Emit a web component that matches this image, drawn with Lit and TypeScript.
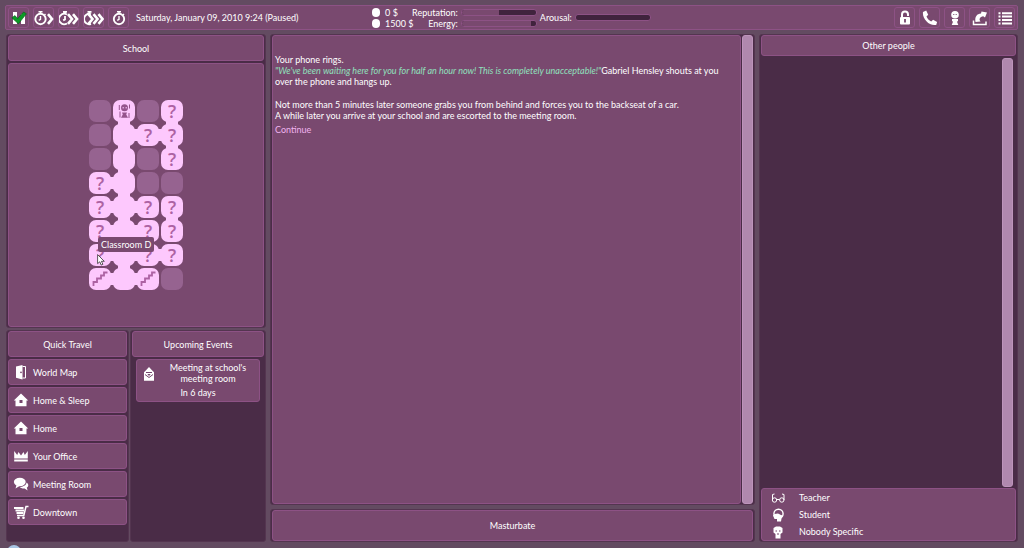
import { LitElement, html, css, svg, nothing, TemplateResult } from "lit";
import { customElement, property } from "lit/decorators.js";
import { classMap } from "lit/directives/class-map.js";

const clock = (x: number) => svg`
  <circle cx=${x} cy="9" r="5.2" fill="none" stroke="#fff" stroke-width="1.9"/>
  <path d="M${x - 2} 1.800h4M${x} 2v2M${x} 6v3.400l-1.800 1M${x + 4} 4l1 1" fill="none" stroke="#fff" stroke-width="1.400"/>`;
const chevron = (x: number) => svg`<path d="M${x} 4.200l4 4.800-4 4.800" fill="none" stroke="#fff" stroke-width="2.600"/>`;

const icons: Record<string, TemplateResult> = {
  check: html`<svg viewBox="0 0 16 16"><path d="M2 2h4v12H2zM10 4h4v10h-4z" fill="#fff"/><path d="M.8 7.800L4 5.600l2.600 3L12.600 2l2.800 1.800-8 10z" fill="#0c9a26" stroke="#075f17" stroke-width=".6"/></svg>`,
  play1: html`<svg class="wide" viewBox="0 0 20 16">${clock(6.5)}${chevron(14)}</svg>`,
  play2: html`<svg class="wide" viewBox="0 0 20 16"><path d="M8 4.600a5.200 5.200 0 1 0 0 8.800M4 1.800h4M6 2v2M6 6v3.400l-1.800 1" fill="none" stroke="#fff" stroke-width="1.800"/>${chevron(9)}${chevron(14)}</svg>`,
  play3: html`<svg class="wide" viewBox="0 0 20 16"><path d="M7 4.200a5 5.200 0 1 0 0 9.600M3.500 1.800h4M5.500 2v2" fill="none" stroke="#fff" stroke-width="1.800"/>${chevron(4.5)}${chevron(9.5)}${chevron(14.5)}</svg>`,
  clock: html`<svg class="wide" viewBox="0 0 20 16">${clock(10)}</svg>`,
  lock: html`<svg viewBox="0 0 16 16"><path d="M5 8V4.500a3 3 0 0 1 6 0V6" fill="none" stroke="#fff" stroke-width="2"/><rect x="3" y="7" width="10" height="7.500" rx="1" fill="#fff"/><path d="M8 9v3.500" stroke="#75466d" stroke-width="1.800"/></svg>`,
  phone: html`<svg viewBox="0 0 16 16"><path d="M1 2L4.200.6l2 4.200-1.700 1.700c.8 2.200 2.600 4 4.700 4.900l1.900-1.700 4 2.200-.9 3C7.500 16.500 0 8.800 1 2z" fill="#fff"/></svg>`,
  person: html`<svg viewBox="0 0 16 16"><circle cx="8" cy="4.800" r="3.800" fill="#fff"/><path d="M5 9h6v2l-1 .8 1.300 3.200H4.700L6 11.800 5 11z" fill="#fff"/><path d="M6.300 4.500h1M8.700 4.500h1" stroke="#75466d"/></svg>`,
  share: html`<svg viewBox="0 0 16 16"><path d="M1.500 10.500v4h12.500v-3" fill="none" stroke="#fff" stroke-width="1.500"/><path d="M3.500 12C2.500 7 5 3.500 9 3.500L9.500 1.500l5.500 1-2 5-1.800-1.200C8 7 6.500 9 8.500 11.500z" fill="#fff"/></svg>`,
  list: html`<svg viewBox="0 0 16 16"><path d="M1.500 3.200h2M5 3.200h10M1.500 6.600h2M5 6.600h10M1.500 10h2M5 10h10M1.500 13.400h2M5 13.400h10" stroke="#fff" stroke-width="2"/></svg>`,
  door: html`<svg viewBox="0 0 16 16"><path d="M3 2.500L9.500 1v14.500L3 13.800z" fill="#fff"/><path d="M9.500 2.500h3v11.500h-3" fill="none" stroke="#fff"/><circle cx="8" cy="8.300" r=".9" fill="#75466d"/></svg>`,
  home: html`<svg viewBox="0 0 16 16"><path d="M8 1.500L15.200 8.500h-1.700v5.800h-11V8.500H.8z" fill="#fff"/><rect x="6.500" y="8" width="3" height="3" fill="#75466d"/></svg>`,
  crown: html`<svg viewBox="0 0 16 16"><path d="M1.200 3l3 4L5.500 4 8 7.500 10.500 4l1.300 3 3-4v7.500H1.200zM1.200 11.600h13.600v2H1.200z" fill="#fff"/></svg>`,
  chat: html`<svg viewBox="0 0 16 16"><ellipse cx="6.800" cy="6" rx="5.900" ry="4.200" fill="#fff"/><path d="M3.500 9l-1 3.500 4-2.500M13.500 6.500c3 2 1.600 4.500.3 5l.8 3-3-2c-2 .2-4.500-.6-4.800-1.500 3 0 6.500-1.600 6.700-4.500z" fill="#fff"/></svg>`,
  cart: html`<svg viewBox="0 0 16 16"><path d="M1 4h9.500M2.500 6.500h8.500M3.500 9h7" stroke="#fff" stroke-width="2"/><path d="M15.500 2.500H13l-2.200 9H4" fill="none" stroke="#fff" stroke-width="1.500"/><circle cx="5.500" cy="13.800" r="1.300" fill="#fff"/><circle cx="10.500" cy="13.800" r="1.300" fill="#fff"/></svg>`,
  letter: html`<svg viewBox="0 0 16 16"><path d="M8 1l3 3.200 2 2v8.600H3V6.200l2-2z" fill="#fff"/><path d="M5 6.500h6M4 8.500L8 11.500l4-3" fill="none" stroke="#75466d"/><path d="M8 10L6.300 8h3.400z" fill="#75466d"/></svg>`,
  glasses: html`<svg viewBox="0 0 16 16"><path d="M2.500 10L2.500 4.500l2-.5M14 10V4.500l-2-.5M6.500 9.500h3" fill="none" stroke="#fff"/><circle cx="4.500" cy="10" r="2.200" fill="none" stroke="#fff"/><circle cx="11.800" cy="10" r="2.200" fill="none" stroke="#fff"/></svg>`,
  student: html`<svg viewBox="0 0 16 16"><circle cx="8.500" cy="6.800" r="4.600" fill="none" stroke="#fff" stroke-width="1.400"/><path d="M4.500 7L8 6.500l3 1.500 2 .5-1.500 3-.5 3H7V12H4.500L3 8.500z" fill="#fff"/></svg>`,
  skull: html`<svg viewBox="0 0 16 16"><path d="M3.500 4L6 2.500h4l2.500 1.500v4.500L10.500 10v4.500h-5V10l-2-1.500z" fill="#fff"/><path d="M5.500 7h1.500M9 7h1.500M7 10h2" stroke="#75466d"/></svg>`,
  figure: html`<svg viewBox="0 0 16 16"><circle cx="8.500" cy="4.800" r="3.500" fill="#95538c"/><path d="M6 9.500h5l-.8 2 1.800 3.300H5l1.800-3.300z" fill="#95538c"/><path d="M3.300 2v5M4 8.500v6M13.500 1.500v4M13 10v5" stroke="#95538c"/><path d="M6.500 4.800H8M9.500 4.800H11" stroke="#fdc8fd"/></svg>`,
  stairs: html`<svg viewBox="0 0 16 16"><path d="M1.500 15v-4H5V7.500h4V4.500h3V1.500h3.500" fill="none" stroke="#ad62a3" stroke-width="1.800"/></svg>`,
};

/* Each cell: kind (x = unexplored, o = corridor, q = room, p = player, s = stairs),
   followed by r / d when it joins its right-hand / lower neighbour. */
const floor = [
  ["x", "pd", "x", "qd"],
  ["x", "ord", "qr", "qd"],
  ["x", "od", "x", "q"],
  ["qr", "od", "x", "x"],
  ["qr", "ord", "q", "qd"],
  ["qr", "ord", "q", "q"],
  ["qr", "ord", "qr", "q"],
  ["sr", "or", "s", "x"],
];

const theme = css`
  :host { display: block; box-sizing: border-box; }
  *, *::before, *::after { box-sizing: border-box; }
  button { font: inherit; color: inherit; margin: 0; padding: 0; cursor: pointer; }
  svg { width: 16px; height: 16px; display: block; flex: none; }
  .card { background: #79496f; border: 1px solid #8d5285; border-radius: 3px; }
`;

@customElement("floor-map")
class FloorMap extends LitElement {
  static styles = [theme, css`
    .map { display: grid; grid-template-columns: repeat(4, 22px); grid-auto-rows: 22px; gap: 2px; }
    .tile { position: relative; display: grid; place-items: center; border: 0; border-radius: 7px; background: #fdc8fd; color: #ad62a3; font: 600 18px/20px "Open Sans", "Noto Sans", sans-serif; }
    .tile.unknown { background: #966390; }
    .tile.right::before { content: ""; position: absolute; left: 20px; top: 5px; width: 6px; height: 12px; background: #fdc8fd; }
    .tile.down::after { content: ""; position: absolute; left: 5px; top: 20px; width: 12px; height: 6px; background: #fdc8fd; }
    .glyph { position: relative; z-index: 1; }
    .tip { position: absolute; z-index: 3; left: 9px; top: -7px; padding: 0 3px; border-radius: 2px; background: #79496f; color: #fff; font: 9px/15px Lato, sans-serif; white-space: nowrap; }
    .cursor { position: absolute; z-index: 4; left: 8px; top: 10px; width: 8px; height: 12px; }
  `];

  render() {
    return html`<div class="map">${floor.flatMap((row, y) => row.map((cell, x) => {
      const kind = cell[0];
      const hovered = y === 6 && x === 0;
      return html`<button class=${classMap({ tile: true, unknown: kind === "x", right: cell.includes("r"), down: cell.includes("d") })} aria-label="Room">
        <span class="glyph">${kind === "q" ? "?" : kind === "s" ? icons.stairs : kind === "p" ? icons.figure : nothing}</span>
        ${hovered ? html`<span class="tip">Classroom D</span>
          <svg class="cursor" viewBox="0 0 8 12"><path d="M.6.600v9l2.200-1.800 1.400 3.300 1.700-.8-1.500-3h2.900z" fill="#fff" stroke="#333" stroke-width=".8"/></svg>` : nothing}
      </button>`;
    }))}</div>`;
  }
}

@customElement("stat-bar")
class StatBar extends LitElement {
  @property({ type: Number }) value = 0;
  static styles = [theme, css`
    .track { height: 7px; width: 76px; border: 1px solid #8d5285; border-radius: 3px; background: #40233d; overflow: hidden; }
    .fill { height: 100%; background: #79496f; }
  `];
  render() {
    return html`<div class="track"><div class="fill" style="width:${this.value}%"></div></div>`;
  }
}

@customElement("app-root")
class AppRoot extends LitElement {
  static styles = [theme, css`
    :host { position: relative; display: flex; flex-direction: column; gap: 4px; height: 100vh; overflow: hidden; padding: 5px 6px 6px 5px; background: #634b61; color: #fff; font: 9px/11px Lato, sans-serif; }
    .top { display: grid; grid-template-columns: 1fr auto 1fr; align-items: center; height: 25px; flex: none; padding: 0 2px; background: #79496f; border: 1px solid #8d5285; border-radius: 2px; }
    .tools { display: flex; align-items: center; gap: 4px; }
    .tools.end { justify-content: flex-end; }
    .tool { display: grid; place-items: center; width: 21px; height: 21px; background: none; border: 1px solid #8d5285; border-radius: 3px; }
    .tool .wide { width: 20px; }
    .date { margin-left: 3px; white-space: nowrap; }
    .stats { display: flex; align-items: center; gap: 3px; line-height: 11px; white-space: nowrap; }
    .money { display: grid; grid-template-columns: 8px 24px; column-gap: 5px; align-items: center; }
    .coin { width: 8px; height: 9px; border-radius: 4px; background: #fff; }
    .levels { display: grid; grid-template-columns: auto auto; column-gap: 3px; align-items: center; text-align: right; }
    .main { flex: 1; min-height: 0; display: grid; grid-template-columns: 260fr 485fr 259fr; gap: 4px; padding-left: 1px; }
    .frame { background: #4a2c47; border: 1px solid #543550; border-radius: 3px; padding: 0 1px; }
    .col { display: flex; flex-direction: column; gap: 4px; min-width: 0; min-height: 0; }
    .left { gap: 2px; }
    .place { display: flex; flex-direction: column; gap: 2px; flex: none; }
    .title { margin: 0; display: grid; place-items: center; height: 26px; flex: none; font-size: 9px; font-weight: 400; }
    .mapbox { height: 264px; display: grid; place-items: center; }
    .lower { flex: 1; min-height: 0; display: grid; grid-template-columns: 123fr 136fr; gap: 1px; }
    .stack { display: flex; flex-direction: column; gap: 2px; }
    .go { display: flex; align-items: center; gap: 4px; height: 26px; padding-left: 4px; flex: none; text-align: left; }
    .event { display: grid; grid-template-columns: 16px 1fr; column-gap: 4px; margin: 0 4px; padding: 2px 3px 3px; }
    .event svg { margin: 4px 0 0 1px; }
    .event p { margin: 0; text-align: center; padding: 0 6px; }
    .event .when { grid-column: 1 / -1; padding: 3px 0 0; }
    .story { flex: 1; min-height: 0; display: grid; grid-template-columns: 1fr 11px; gap: 1px; }
    .text { padding: 18px 2px 0; }
    .text p { margin: 0 0 12px; }
    .text p:last-of-type { margin-bottom: 3px; }
    .quote { color: #8fe0bd; font-style: italic; }
    .text a { color: #f0b3ee; text-decoration: none; }
    .bar { background: #b088ae; border: 1px solid #bd94bb; border-radius: 3px; }
    .action { flex: none; height: 33px; display: grid; }
    .people { display: flex; flex-direction: column; }
    .people .title { height: 21px; }
    .list { flex: 1; display: flex; justify-content: flex-end; padding: 2px 3px 1px; }
    .list .bar { width: 11px; }
    .legend { margin: 0; padding: 0 0 0 8px; list-style: none; flex: none; }
    .legend li { display: flex; align-items: center; gap: 13px; height: 17px; }
    .orb { position: absolute; left: 7px; bottom: -11px; width: 14px; height: 14px; border-radius: 50%; background: #a9c6e4; }
  `];

  tool(icon: string, label: string) {
    return html`<button class="tool" aria-label=${label}>${icons[icon]}</button>`;
  }
  go(icon: string, label: string) {
    return html`<button class="card go">${icons[icon]}<span>${label}</span></button>`;
  }

  render() {
    return html`
      <header class="top">
        <div class="tools">
          ${this.tool("check", "Mods")}${this.tool("play1", "Slow")}${this.tool("play2", "Fast")}${this.tool("play3", "Fastest")}${this.tool("clock", "Wait")}
          <span class="date">Saturday, January 09, 2010 9:24 (Paused)</span>
        </div>
        <div class="stats">
          <div class="money"><span class="coin"></span><span>0 $</span><span class="coin"></span><span>1500 $</span></div>
          <div class="levels">
            <span>Reputation:</span><stat-bar .value=${50}></stat-bar>
            <span>Energy:</span><stat-bar .value=${93}></stat-bar>
          </div>
          <span>Arousal:</span><stat-bar .value=${0}></stat-bar>
        </div>
        <div class="tools end">
          ${this.tool("lock", "Lock")}${this.tool("phone", "Phone")}${this.tool("person", "Character")}${this.tool("share", "Leave")}${this.tool("list", "Menu")}
        </div>
      </header>
      <main class="main">
        <div class="col left">
          <section class="frame place">
            <h2 class="card title">School</h2>
            <div class="card mapbox"><floor-map></floor-map></div>
          </section>
          <div class="lower">
            <nav class="frame stack">
              <h2 class="card title">Quick Travel</h2>
              ${this.go("door", "World Map")}${this.go("home", "Home & Sleep")}${this.go("home", "Home")}
              ${this.go("crown", "Your Office")}${this.go("chat", "Meeting Room")}${this.go("cart", "Downtown")}
            </nav>
            <section class="frame stack">
              <h2 class="card title">Upcoming Events</h2>
              <div class="card event">${icons.letter}<p>Meeting at school's meeting room</p><p class="when">In 6 days</p></div>
            </section>
          </div>
        </div>
        <div class="col">
          <section class="frame story">
            <div class="card text">
              <p>Your phone rings.<br><span class="quote">"We've been waiting here for you for half an hour now! This is completely unacceptable!"</span>Gabriel Hensley shouts at you over the phone and hangs up.</p>
              <p>Not more than 5 minutes later someone grabs you from behind and forces you to the backseat of a car.<br>A while later you arrive at your school and are escorted to the meeting room.</p>
              <a href="#">Continue</a>
            </div>
            <div class="bar"></div>
          </section>
          <div class="frame action"><button class="card">Masturbate</button></div>
        </div>
        <section class="frame people">
          <h2 class="card title">Other people</h2>
          <div class="list"><div class="bar"></div></div>
          <ul class="card legend">
            <li>${icons.glasses}<span>Teacher</span></li>
            <li>${icons.student}<span>Student</span></li>
            <li>${icons.skull}<span>Nobody Specific</span></li>
          </ul>
        </section>
      </main>
      <span class="orb"></span>`;
  }
}
